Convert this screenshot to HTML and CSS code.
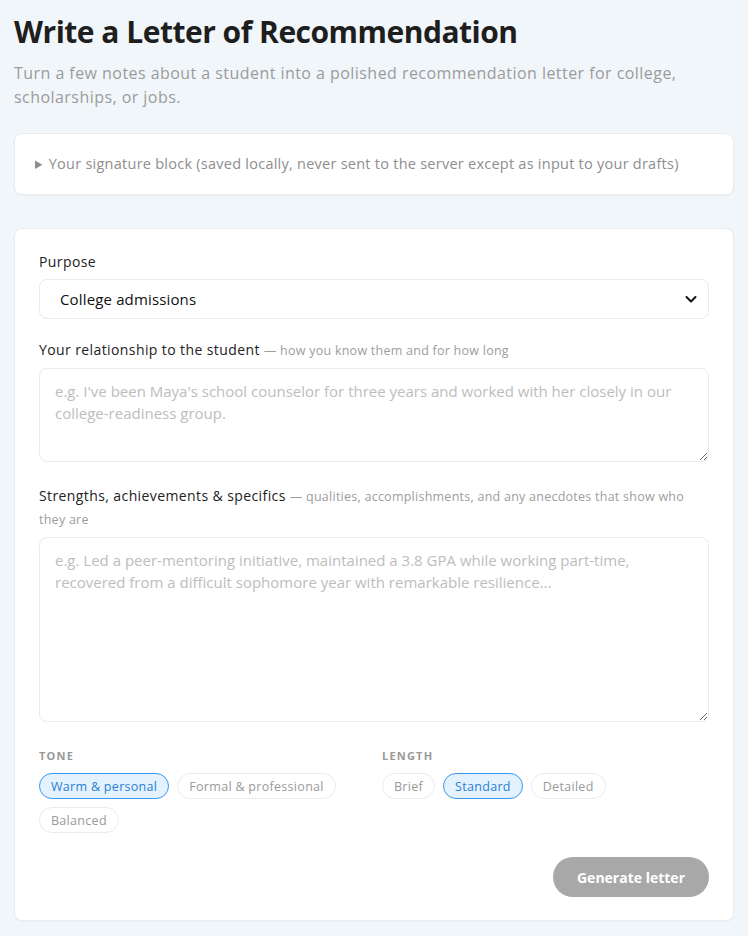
FILE: index.html
```html
<!DOCTYPE html>
<html lang="en">
<head>
<meta charset="utf-8">
<title>Write a Letter of Recommendation</title>
<link rel="stylesheet" href="styles.css">
</head>
<body>
<main class="page">
  <h1 class="title">Write a Letter of Recommendation</h1>
  <p class="subtitle">Turn a few notes about a student into a polished recommendation letter for college, scholarships, or jobs.</p>

  <details class="card sig-card">
    <summary class="sig-summary">Your signature block (saved locally, never sent to the server except as input to your drafts)</summary>
  </details>

  <form class="card form-card">
    <div class="field">
      <label class="label" for="purpose">Purpose</label>
      <div class="select-wrap">
        <select id="purpose" class="select">
          <option>College admissions</option>
          <option>Scholarship</option>
          <option>Job</option>
        </select>
        <svg class="chev" width="14" height="14" viewBox="0 0 14 14" aria-hidden="true"><path d="M2.5 5 L7 9.5 L11.5 5" fill="none" stroke="#111" stroke-width="2" stroke-linecap="round" stroke-linejoin="round"/></svg>
      </div>
    </div>

    <div class="field field-text">
      <label class="label" for="rel">Your relationship to the student <span class="hint">— how you know them and for how long</span></label>
      <textarea id="rel" class="textarea ta-short" placeholder="e.g. I've been Maya's school counselor for three years and worked with her closely in our college-readiness group."></textarea>
    </div>

    <div class="field field-text">
      <label class="label" for="str">Strengths, achievements &amp; specifics <span class="hint">— qualities, accomplishments, and any anecdotes that show who they are</span></label>
      <textarea id="str" class="textarea ta-tall" placeholder="e.g. Led a peer-mentoring initiative, maintained a 3.8 GPA while working part-time, recovered from a difficult sophomore year with remarkable resilience..."></textarea>
    </div>

    <div class="options">
      <div class="opt-group">
        <div class="opt-label">Tone</div>
        <div class="chips">
          <button type="button" class="chip chip-active">Warm &amp; personal</button>
          <button type="button" class="chip">Formal &amp; professional</button>
          <button type="button" class="chip">Balanced</button>
        </div>
      </div>
      <div class="opt-group">
        <div class="opt-label">Length</div>
        <div class="chips">
          <button type="button" class="chip">Brief</button>
          <button type="button" class="chip chip-active">Standard</button>
          <button type="button" class="chip">Detailed</button>
        </div>
      </div>
    </div>

    <div class="actions">
      <button type="button" class="generate" disabled>Generate letter</button>
    </div>
  </form>
</main>
</body>
</html>
```

FILE: styles.css
```css
* { box-sizing: border-box; }

html, body {
  margin: 0;
  padding: 0;
  background: #f1f6fa;
}

body {
  font-family: "Open Sans", "Noto Sans", sans-serif;
  color: #222;
}

.page {
  padding: 12px 14px 14px 14px;
}

.title {
  margin: 0;
  font-size: 30px;
  line-height: 40px;
  font-weight: 700;
  color: #1e1e1e;
  letter-spacing: -0.5px;
}

.subtitle {
  margin: 9px 0 0 0;
  font-size: 16px;
  line-height: 24px;
  letter-spacing: 0.45px;
  color: #9b9b9b;
  max-width: 700px;
}

.card {
  background: #fff;
  border: 1px solid #e7ecf1;
  border-radius: 8px;
  box-shadow: 0 1px 2px rgba(0, 0, 0, 0.03);
}

.sig-card {
  margin-top: 24px;
  padding: 19px 20px;
}

.sig-summary {
  font-size: 14.5px;
  line-height: 21px;
  letter-spacing: 0.25px;
  color: #8e8e8e;
  cursor: pointer;
}

.sig-summary::marker {
  font-size: 13px;
  color: #8e8e8e;
}

.form-card {
  margin-top: 33px;
  padding: 22px 24px 23px 24px;
}

.field {
  margin-bottom: 20px;
}

.field-text {
  margin-bottom: 23px;
}

.label {
  display: block;
  font-size: 14px;
  line-height: 22px;
  letter-spacing: 0.4px;
  color: #222;
  margin-bottom: 6px;
}

.hint {
  font-size: 12.5px;
  letter-spacing: 0.25px;
  color: #9d9d9d;
}

.select-wrap {
  position: relative;
  margin-top: 1px;
}

.select {
  display: block;
  width: 100%;
  height: 40px;
  appearance: none;
  -webkit-appearance: none;
  border: 1px solid #e7ebef;
  border-radius: 8px;
  background: #fff;
  padding: 0 20px;
  font-family: inherit;
  font-size: 15px;
  letter-spacing: 0.15px;
  color: #111;
}

.chev {
  position: absolute;
  right: 11px;
  top: 13px;
  pointer-events: none;
}

.textarea {
  display: block;
  width: 100%;
  border: 1px solid #e7ebef;
  border-radius: 8px;
  padding: 11px 15px;
  font-family: inherit;
  font-size: 15px;
  line-height: 22px;
  color: #222;
  background: #fff;
  resize: vertical;
}

.textarea::placeholder {
  color: #bdbdbd;
}

.ta-short { height: 94px; }
.ta-tall { height: 185px; }

.options {
  display: grid;
  grid-template-columns: 1fr 1fr;
  column-gap: 16px;
}

.opt-label {
  font-size: 11px;
  line-height: 22px;
  font-weight: 700;
  letter-spacing: 1.2px;
  text-transform: uppercase;
  color: #999;
  margin-bottom: 6px;
}

.chips {
  display: flex;
  flex-wrap: wrap;
  gap: 8px;
}

.chip {
  height: 26px;
  padding: 0 11px;
  border: 1px solid #e8ebee;
  border-radius: 13px;
  background: #fff;
  font-family: inherit;
  font-size: 12.5px;
  letter-spacing: 0.3px;
  color: #9a9a9a;
  cursor: pointer;
}

.chip-active {
  background: #e4f2fe;
  border-color: #3b97f0;
  color: #2a7fd4;
}

.actions {
  display: flex;
  justify-content: flex-end;
  margin-top: 24px;
}

.generate {
  width: 156px;
  height: 40px;
  border: 0;
  border-radius: 20px;
  background: #a8a8a8;
  color: #fff;
  font-family: inherit;
  font-size: 14px;
  font-weight: 700;
}
```
